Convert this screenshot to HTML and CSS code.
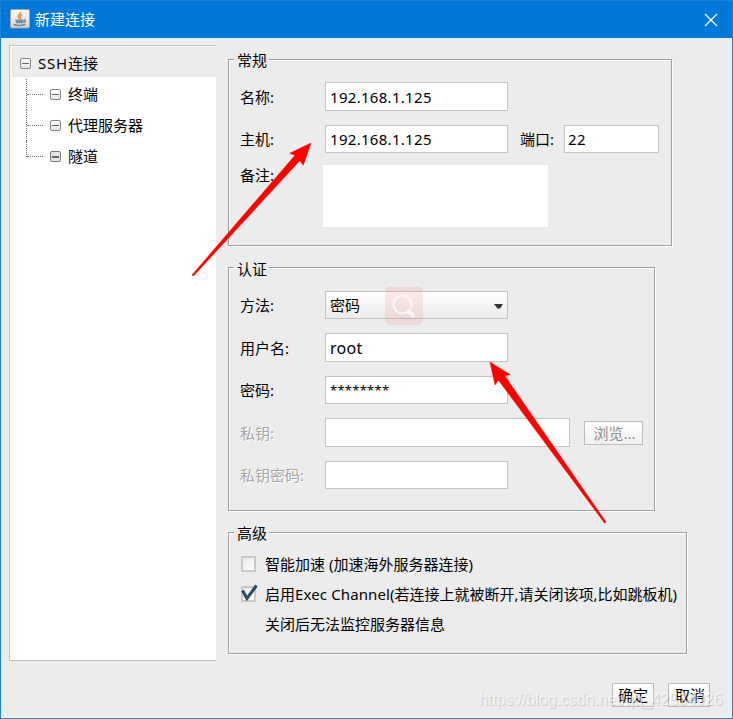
FILE: index.html
```
<!DOCTYPE html>
<html lang="zh-CN">
<head>
<meta charset="utf-8">
<title>新建连接</title>
<link rel="stylesheet" href="styles.css">
</head>
<body>
<div class="window">
  <header class="titlebar">
    <svg class="app-icon" width="20" height="20" viewBox="0 0 20 20">
      <defs><linearGradient id="tile" x1="0" y1="0" x2="0" y2="1"><stop offset="0" stop-color="#fff"/><stop offset="1" stop-color="#d3d3d3"/></linearGradient></defs>
      <rect x=".5" y=".5" width="19" height="18.5" rx="1.5" fill="url(#tile)" stroke="#aaa69f"/>
      <path d="M10.500 3c1.200 1.500-3.200 2.800-2.200 4.800.3.800 1.200 1.300 1.400 2.200M12.300 5.600c-2 1-2.500 1.900-1.700 2.800.5.600.2 1.100-.4 1.700" fill="none" stroke="#ea8a3e" stroke-width="1.500"/>
      <path d="M5 10.500h8.500l-.8 3.700H6.100z" fill="#7591a8"/>
      <path d="M13.500 11c2.600-.6 2.500 2-.5 2.300M3.500 15.300c2.500 1.600 10 1.500 12-.2" fill="none" stroke="#6685a0" stroke-width="1.400"/>
    </svg>
    <h1>新建连接</h1>
    <svg class="close" width="14" height="14" viewBox="0 0 14 14"><path d="M1 1l12 12M13 1L1 13" stroke="#fff" stroke-width="1.200"/></svg>
  </header>
  <div class="body">
    <nav class="tree">
      <div class="node root"><i class="toggle"></i><span><span class="ssh">SSH</span>连接</span></div>
      <div class="children">
        <div class="node"><i class="toggle"></i><span>终端</span></div>
        <div class="node"><i class="toggle"></i><span>代理服务器</span></div>
        <div class="node last"><i class="toggle dark"></i><span>隧道</span></div>
      </div>
    </nav>
    <main class="form">
      <section class="group general">
        <h2>常规</h2>
        <div class="row first"><label>名称:</label><div class="field tall">192.168.1.125</div></div>
        <div class="row g14"><label>主机:</label><div class="field">192.168.1.125</div><label class="port-label">端口:</label><div class="field port">22</div></div>
        <div class="row g12 notes"><label>备注:</label><div class="textarea"></div></div>
      </section>
      <section class="group auth">
        <h2>认证</h2>
        <div class="row first"><label>方法:</label><div class="field select">密码<svg width="9" height="6" viewBox="0 0 9 6"><path d="M0 1h9L6 5.500H3.500z" fill="#333"/></svg></div></div>
        <div class="row g14"><label>用户名:</label><div class="field tall user">root</div></div>
        <div class="row g14"><label>密码:</label><div class="field secret">********</div></div>
        <div class="row g14"><label class="off">私钥:</label><div class="field tall key"></div><button class="browse" disabled>浏览...</button></div>
        <div class="row g14"><label class="off">私钥密码:</label><div class="field"></div></div>
      </section>
      <section class="group advanced">
        <h2>高级</h2>
        <div class="option"><i class="check"></i><span>智能加速 (加速海外服务器连接)</span></div>
        <div class="option"><i class="check"><svg width="18" height="18" viewBox="0 0 18 18"><path d="M1.500 6.500l4.500 8L15.500 1.500" fill="none" stroke="#2a4a66" stroke-width="3"/></svg></i><span>启用<span class="latin">Exec Channel</span>(若连接上就被断开,请关闭该项,比如跳板机)</span></div>
        <div class="option"><span class="hint">关闭后无法监控服务器信息</span></div>
      </section>
      <footer class="actions"><button>确定</button><button>取消</button></footer>
    </main>
  </div>
  <svg class="overlay" width="733" height="719" viewBox="0 0 733 719">
    <path d="M311 143L289.700 153.300 295 155.300 192 275 193.500 276 299.700 160.700 303.300 165.300z" fill="#f00" stroke="#f00" stroke-width=".5"/>
    <path d="M490 362L510.300 374.700 504.700 375.700 606 522 604.500 523 498.300 380 495 385z" fill="#f00" stroke="#f00" stroke-width=".5"/>
    <rect x="385" y="287" width="38" height="38" rx="5" fill="#ff5050" fill-opacity=".12"/>
    <g fill="none" stroke="#fff" stroke-opacity=".7"><circle cx="402.500" cy="304.500" r="9" stroke-width="2"/><path d="M409 311.500l4 4" stroke-width="4" stroke-linecap="round"/></g>
  </svg>
  <div class="watermark">https://blog.csdn.net/qq_42534026</div>
</div>
</body>
</html>
```
FILE: styles.css
```
* { box-sizing: border-box; }
body { margin: 0; font: 15px/20px "Noto Sans", "Noto Sans CJK SC", sans-serif; color: #000; }
.window { position: relative; width: 733px; height: 719px; overflow: hidden; background: #ececec; border: 1px solid #1883d7; border-top: 0; box-shadow: inset -1px -1px #fff; }
.titlebar { display: flex; align-items: center; height: 38px; margin: 0 -1px; padding: 0 15px 0 10px; background: #0078d7; border-top: 1px solid #1883d7; color: #fff; }
.titlebar h1 { flex: 1; margin: -1px 0 0 5px; font-size: 15px; font-weight: 400; }
.app-icon { margin-top: -1px; }
.body { display: flex; padding: 7px 0 0 8px; }
.tree { width: 207px; height: 616px; padding: 1px 0 0 2px; background: #fff; border: solid #c3c3c3; border-width: 1px 0 1px 1px; }
.node { display: flex; align-items: center; height: 31px; }
.node > span { margin-top: -1px; }
.root { height: 30px; padding-left: 8px; background: #ececec; gap: 7px; }
.root > span { margin-top: 2px; }
.root .toggle { margin-top: 2px; }
.ssh { letter-spacing: .8px; }
.toggle { position: relative; flex: none; width: 11px; height: 11px; border: 1px solid #858585; border-radius: 2px; background: linear-gradient(#fff, #e8e8e8); }
.toggle::after { content: ""; position: absolute; left: 1px; top: 4px; width: 7px; height: 1px; background: #666; }
.dark { border-color: #777; background: #e4e4e4; }
.dark::after { height: 2px; }
.children { padding: 2px 0 0 14px; }
.children .node { position: relative; padding-left: 24px; gap: 7px; }
.children .node::before { content: ""; position: absolute; left: 0; top: 0; width: 0; height: 31px; border-left: 1px dotted #777; }
.children .last::before { height: 16px; }
.children .node::after { content: ""; position: absolute; left: 1px; top: 15px; width: 16px; border-top: 1px dotted #777; }
.form { position: relative; padding: 14px 0 0 12px; }
.group { border: 1px solid #9f9f9f; box-shadow: 1px 1px #fff, inset 1px 1px #fff; }
.general { width: 444px; height: 187px; }
.auth { width: 427px; height: 244px; margin-top: 21px; }
.advanced { width: 459px; height: 122px; margin-top: 21px; }
.group h2 { width: 35px; height: 20px; margin: -9px 0 0 5px; padding-left: 3px; background: #ececec; font-size: 15px; font-weight: 400; line-height: 18px; white-space: nowrap; }
.auth h2 { line-height: 20px; }
.row { display: flex; align-items: center; padding-left: 11px; }
.first { margin-top: 11px; }
.auth .first { margin-top: 12px; }
.g14 { margin-top: 14px; }
.g12 { margin-top: 12px; }
.row label { width: 85px; white-space: nowrap; }
.field { width: 183px; height: 28px; padding: 0 4px; line-height: 26px; border: 1px solid #c3c3c3; background: #fff; letter-spacing: .3px; }
.tall { height: 29px; line-height: 28px; }
.row .port-label { width: 44px; margin-left: 12px; }
.port { width: 95px; padding: 0 3px; }
.notes { align-items: flex-start; }
.textarea { width: 225px; height: 62px; margin-left: -2px; background: #fff; }
.select { display: flex; align-items: center; justify-content: space-between; background: linear-gradient(#fff, #ebebeb); letter-spacing: 0; }
.select svg { margin-top: 2px; }
.user { font-size: 16px; line-height: 29px; }
.secret { font-size: 13px; line-height: 27px; letter-spacing: .25px; }
.key { width: 245px; }
.off { color: #a6a6a6; text-shadow: 1px 1px #fff; }
button { height: 24px; padding: 0; border: 1px solid #bcbcbc; background: linear-gradient(#fff, #f0f0f0); font: inherit; line-height: 20px; color: #000; }
.browse { width: 59px; margin-left: 14px; padding-left: 2px; color: #8d8d8d; }
.option { display: flex; align-items: center; height: 30px; padding-left: 12px; white-space: nowrap; }
.option > span { margin-top: -2px; }
.latin { letter-spacing: .12px; }
.group h2 + .option { margin-top: 6px; }
.check { position: relative; width: 15px; height: 16px; margin: -3px 9px 0 0; border: 2px solid #c9c9c9; background: linear-gradient(135deg, #e8e8e8, #fff); }
.check svg { position: absolute; left: -2px; top: -4px; }
.option .hint { margin-left: 24px; }
.actions { display: flex; gap: 14px; margin: 29px 0 0 384px; }
.actions button { width: 42px; }
.actions button + button { padding-left: 2px; }
.overlay { position: absolute; left: -1px; top: 0; pointer-events: none; }
.watermark { position: absolute; left: 478px; top: 690px; font: 16px/20px "Liberation Sans", sans-serif; letter-spacing: -.07px; color: rgba(255,255,255,.65); text-shadow: 1px 1px 1px rgba(0,0,0,.16); white-space: nowrap; }
```
